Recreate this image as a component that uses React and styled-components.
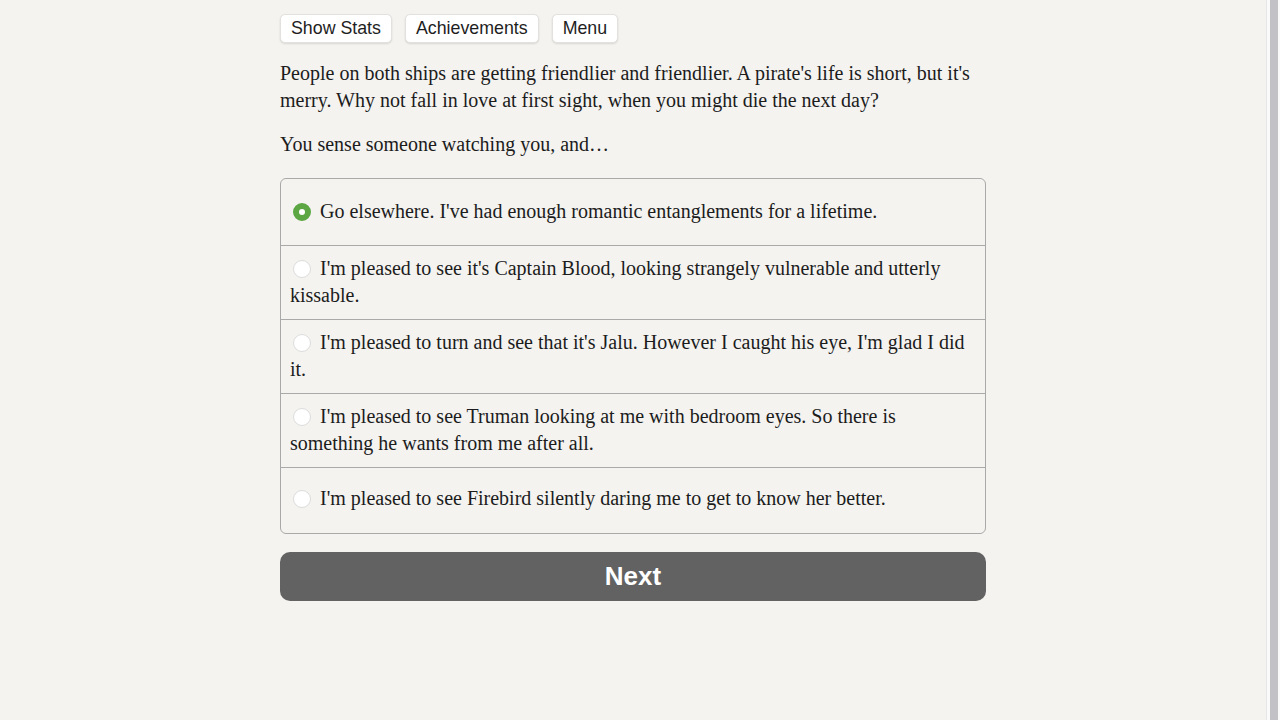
import { useState } from "react";
import styled, { createGlobalStyle } from "styled-components";

const GlobalStyle = createGlobalStyle`
  html, body {
    margin: 0;
    padding: 0;
    height: 100%;
    overflow: hidden;
    background: #f4f3f0;
  }
  #root {
    height: 100%;
  }
`;

const choices = [
  "Go elsewhere. I've had enough romantic entanglements for a lifetime.",
  "I'm pleased to see it's Captain Blood, looking strangely vulnerable and utterly kissable.",
  "I'm pleased to turn and see that it's Jalu. However I caught his eye, I'm glad I did it.",
  "I'm pleased to see Truman looking at me with bedroom eyes. So there is something he wants from me after all.",
  "I'm pleased to see Firebird silently daring me to get to know her better.",
];

const App = () => {
  const [selected, setSelected] = useState(0);

  return (
    <Page>
      <GlobalStyle />
      <Main>
        <Column>
          <ButtonBar>
            <TopButton>Show Stats</TopButton>
            <TopButton>Achievements</TopButton>
            <TopButton>Menu</TopButton>
          </ButtonBar>
          <Text>
            People on both ships are getting friendlier and friendlier. A
            pirate's life is short, but it's merry. Why not fall in love at
            first sight, when you might die the next day?
          </Text>
          <Text>You sense someone watching you, and…</Text>
          <ChoiceBox>
            {choices.map((choice, i) => (
              <Choice key={i} onClick={() => setSelected(i)}>
                <Radio checked={selected === i} />
                {choice}
              </Choice>
            ))}
          </ChoiceBox>
          <NextButton>Next</NextButton>
        </Column>
      </Main>
      <Scrollbar>
        <Thumb />
      </Scrollbar>
    </Page>
  );
};

export default App;

const Page = styled.div`
  display: flex;
  height: 100%;
`;

const Main = styled.div`
  flex: 1;
  display: flex;
  justify-content: center;
`;

const Column = styled.div`
  width: 706px;
  padding-top: 14px;
`;

const ButtonBar = styled.div`
  display: flex;
  gap: 13px;
  margin-bottom: 17px;
`;

const TopButton = styled.button`
  height: 29px;
  padding: 0 10px;
  background: #ffffff;
  border: 1px solid #e2e1de;
  border-radius: 5px;
  box-shadow: 0 1px 2px rgba(0, 0, 0, 0.12);
  font-family: "Liberation Sans", Arial, sans-serif;
  font-size: 17.8px;
  color: #1e1e1e;
  cursor: pointer;
`;

const Text = styled.p`
  margin: 0 0 17px;
  font-family: "Liberation Serif", "Times New Roman", serif;
  font-size: 20px;
  line-height: 27px;
  color: #1c1c1c;
`;

const ChoiceBox = styled.div`
  margin-top: 20px;
  border: 1px solid #a9a9a9;
  border-radius: 6px;
  overflow: hidden;
`;

const Choice = styled.label`
  display: block;
  padding: 9px 9px 10px;
  font-family: "Liberation Serif", "Times New Roman", serif;
  font-size: 20px;
  line-height: 27px;
  color: #1c1c1c;
  cursor: pointer;

  & + & {
    border-top: 1px solid #a9a9a9;
  }

  &:first-child {
    padding-top: 19px;
    padding-bottom: 20px;
  }

  &:last-child {
    padding-top: 17px;
    padding-bottom: 21px;
  }
`;

const Radio = styled.span`
  display: inline-block;
  box-sizing: border-box;
  width: 18px;
  height: 18px;
  margin: 0 9px 0 3px;
  vertical-align: -3px;
  border-radius: 50%;
  background: #ffffff;
  border: ${(props) =>
    props.checked ? "6px solid #5ca744" : "1px solid #dcdcdc"};
`;

const NextButton = styled.button`
  display: block;
  width: 100%;
  height: 49px;
  margin-top: 18px;
  background: #626262;
  border: none;
  border-radius: 10px;
  font-family: "Liberation Sans", Arial, sans-serif;
  font-weight: bold;
  font-size: 26px;
  color: #ffffff;
  cursor: pointer;
`;

const Scrollbar = styled.div`
  width: 14px;
  box-sizing: border-box;
  padding: 0 2px 0 3px;
  background: #fafafa;
  border-left: 1px solid #e6e6e6;
`;

const Thumb = styled.div`
  height: 100%;
  background: #c2c2c6;
`;
